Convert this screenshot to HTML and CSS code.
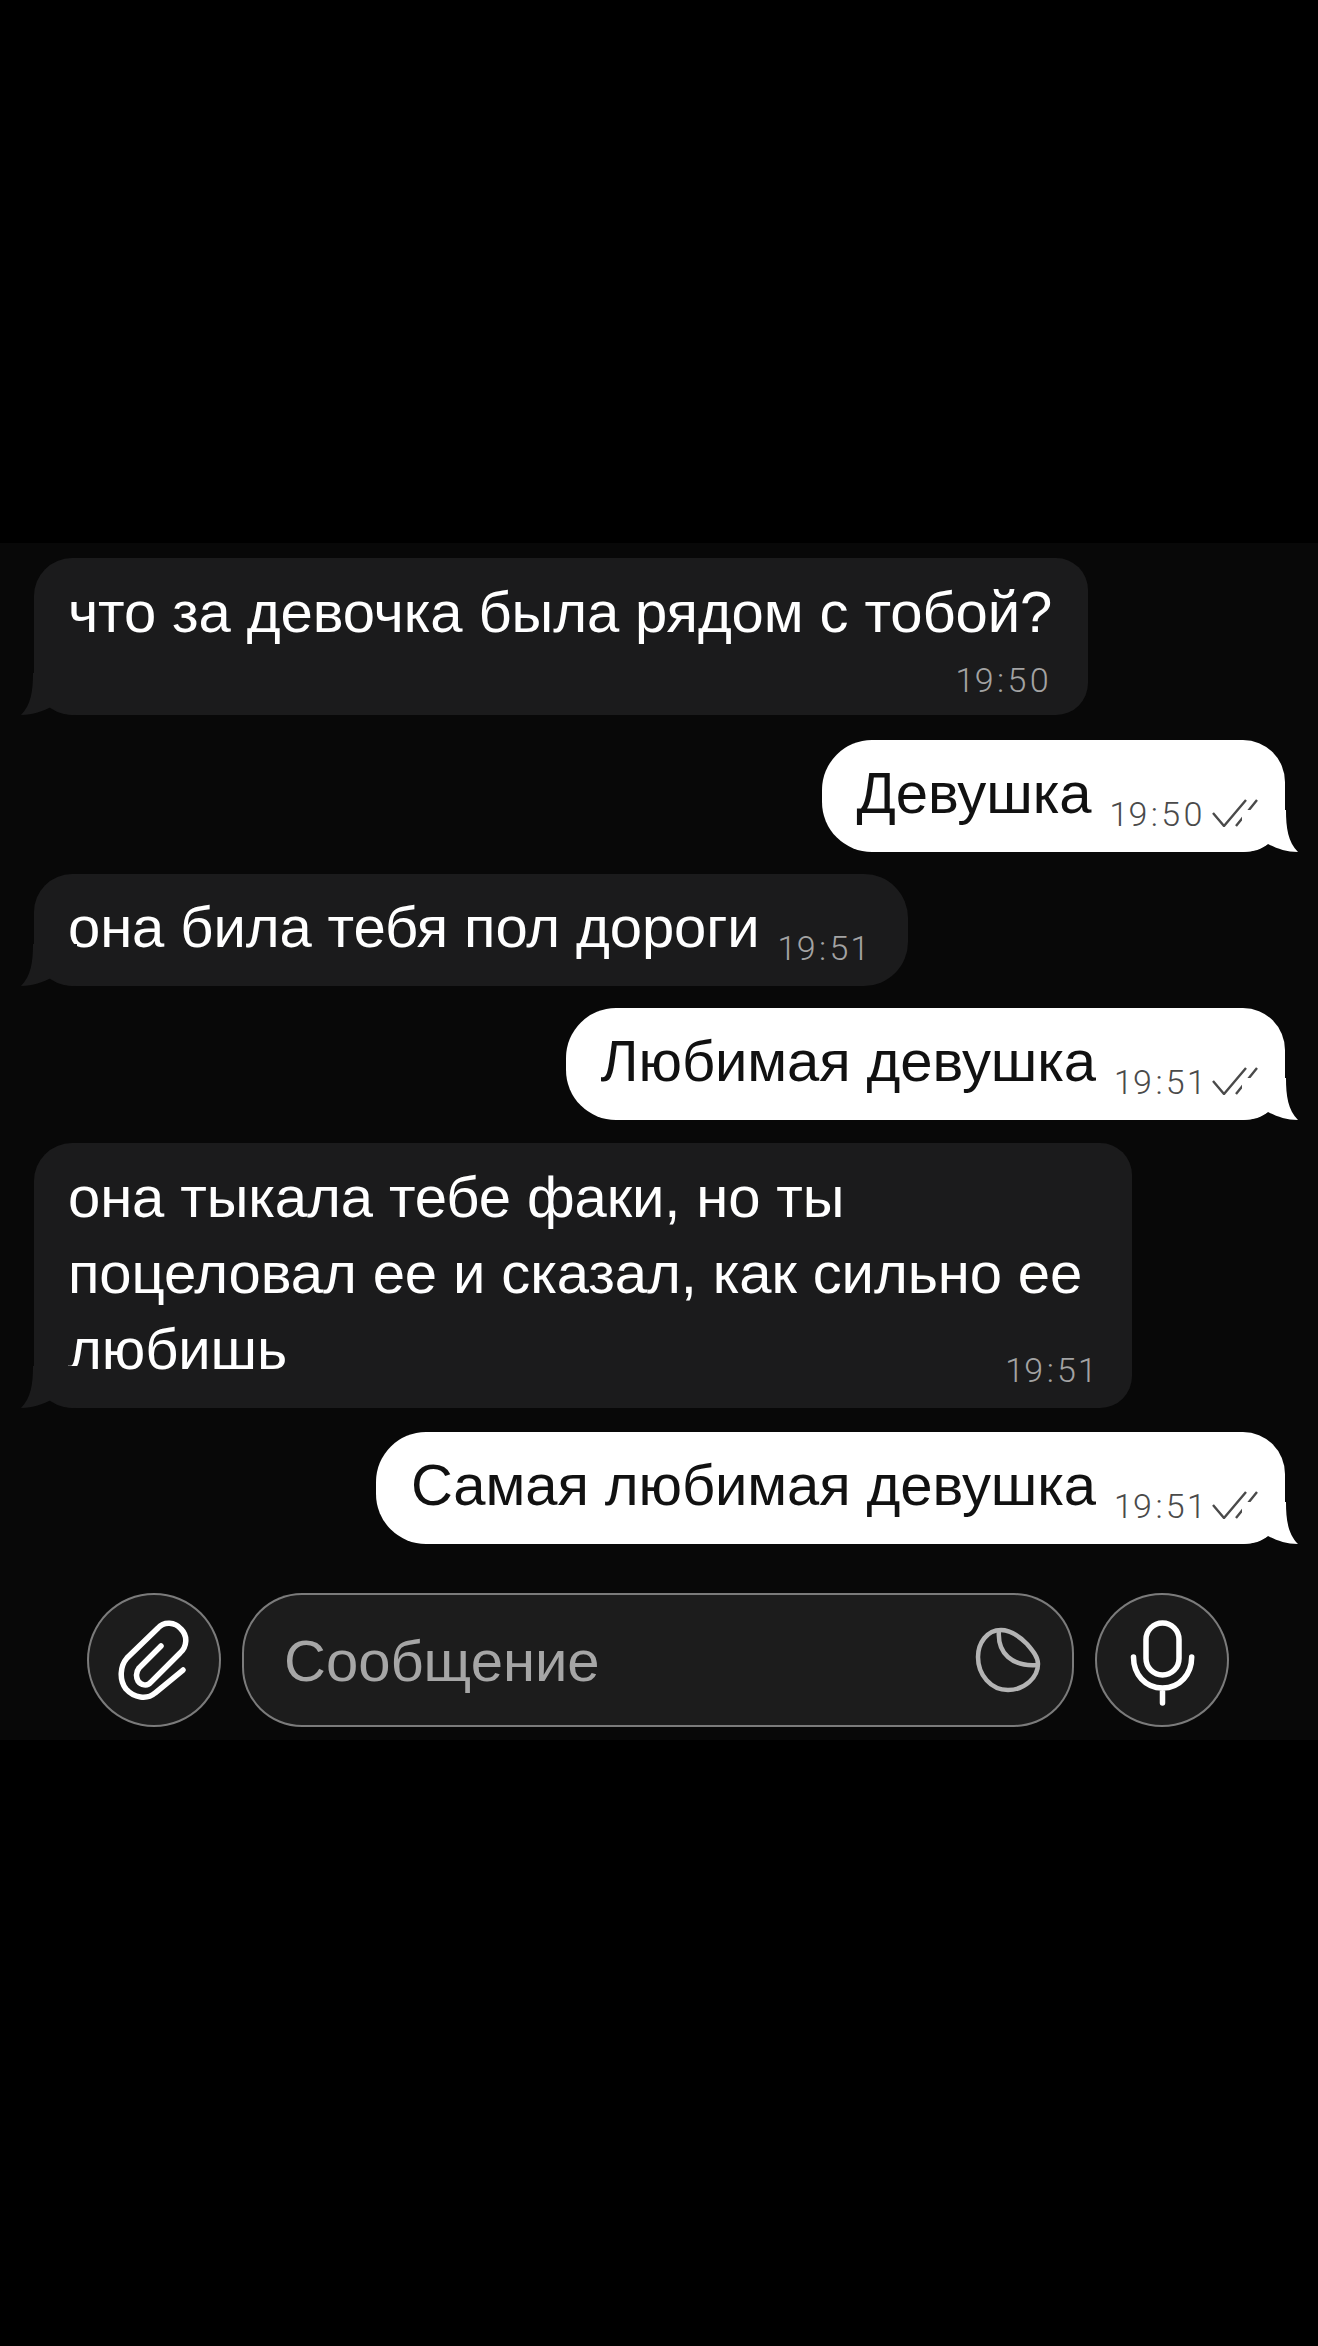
FILE: index.html
```html
<!DOCTYPE html>
<html lang="ru">
<head>
	<meta charset="UTF-8">
	<title>Чат</title>
	<link rel="stylesheet" href="styles.css">
</head>
<body>
	<div class="chat">
		<div class="msg in stack">
			<div class="msg-text">что за девочка была рядом с тобой?</div>
			<div class="time">19:50</div>
			<svg class="tail" viewBox="0 0 56 42"><path d="M12 0C12 18 10 32 0 42C12 42 22 38 30 34C36 39 44 42 56 42V0Z"/></svg>
		</div>
		<div class="msg out">
			<div class="msg-text">Девушка</div>
			<div class="time">19:50</div>
			<svg class="check" viewBox="0 0 46 28"><path d="M1 14L12 27L34 1M24 27L45 1"/></svg>
			<svg class="tail" viewBox="0 0 56 42"><path d="M12 0C12 18 10 32 0 42C12 42 22 38 30 34C36 39 44 42 56 42V0Z"/></svg>
		</div>
		<div class="msg in">
			<div class="msg-text">она била тебя пол дороги</div>
			<div class="time">19:51</div>
			<svg class="tail" viewBox="0 0 56 42"><path d="M12 0C12 18 10 32 0 42C12 42 22 38 30 34C36 39 44 42 56 42V0Z"/></svg>
		</div>
		<div class="msg out">
			<div class="msg-text">Любимая девушка</div>
			<div class="time">19:51</div>
			<svg class="check" viewBox="0 0 46 28"><path d="M1 14L12 27L34 1M24 27L45 1"/></svg>
			<svg class="tail" viewBox="0 0 56 42"><path d="M12 0C12 18 10 32 0 42C12 42 22 38 30 34C36 39 44 42 56 42V0Z"/></svg>
		</div>
		<div class="msg in overlay">
			<div class="msg-text">она тыкала тебе факи, но ты<br>поцеловал ее и сказал, как сильно ее<br>любишь</div>
			<div class="time">19:51</div>
			<svg class="tail" viewBox="0 0 56 42"><path d="M12 0C12 18 10 32 0 42C12 42 22 38 30 34C36 39 44 42 56 42V0Z"/></svg>
		</div>
		<div class="msg out">
			<div class="msg-text">Самая любимая девушка</div>
			<div class="time">19:51</div>
			<svg class="check" viewBox="0 0 46 28"><path d="M1 14L12 27L34 1M24 27L45 1"/></svg>
			<svg class="tail" viewBox="0 0 56 42"><path d="M12 0C12 18 10 32 0 42C12 42 22 38 30 34C36 39 44 42 56 42V0Z"/></svg>
		</div>

		<div class="composer">
			<div class="round-btn">
				<svg class="clip-icon" viewBox="0 0 74 80"><path d="M66 50L38 73C30 80 17 78 9 69C2 60 3 46 10 38L41 8C47 1 58 2 64 9C71 16 70 27 63 33L34 62C30 67 24 65 21 61C19 57 19 52 22 48L44 26"/></svg>
			</div>
			<div class="input-box">
				<span class="placeholder">Сообщение</span>
				<svg class="sticker-icon" viewBox="0 0 66 66"><path d="M26 3C12 3 3 16 3 30C3 48 16 63 33 63C50 63 63 50 63 37C63 30 58 24 52 17C44 9 36 3 26 3Z"/><path class="fold" d="M24 3C23 14 26 24 33 30C41 37 52 39 63 38"/></svg>
			</div>
			<div class="round-btn">
				<svg class="mic-icon" viewBox="0 0 68 86"><rect x="17" y="3" width="33" height="52" rx="16.5"/><path d="M4.5 37C4.5 54 16 68 33.5 68C51 68 62.7 54 62.7 37M33.5 68V83"/></svg>
			</div>
		</div>
	</div>
</body>
</html>
```

FILE: styles.css
```css
html,body{
	margin:0;
	background:#000;
	height:100%;
}
body{
	font-family:"Liberation Sans",Arial,sans-serif;
}
.chat{
	margin-top:543px;
	height:1197px;
	box-sizing:border-box;
	padding:15px 33px 0 34px;
	background:#080808;
	display:flex;
	flex-direction:column;
	gap:22px;
}
.msg{
	position:relative;
	display:flex;
	align-items:flex-end;
	box-sizing:border-box;
	height:112px;
	font-size:58px;
	letter-spacing:-.1px;
	line-height:76px;
}
.msg.in{
	align-self:flex-start;
	padding:0 38px 0 34px;
	border-radius:38px 44px 44px 38px;
	background:#1b1b1c;
	color:#fff;
}
.msg.out{
	align-self:flex-end;
	padding:0 27px 0 35px;
	border-radius:50px 42px 42px 50px;
	background:#fff;
	color:#111;
}
.msg-text{
	padding-bottom:21px;
	white-space:nowrap;
}
.msg.stack{
	display:block;
	height:157px;
	margin-bottom:3px;
	padding-top:16px;
	padding-right:36px;
	border-radius:38px 32px 32px 38px;
}
.msg.stack .msg-text{
	padding-bottom:0;
}
.msg.stack .time{
	margin:10px 0 0;
	text-align:right;
}
.msg.overlay{
	display:grid;
	height:265px;
	margin:1px 0 2px;
	padding-top:16px;
	padding-right:50px;
	border-radius:38px 32px 32px 38px;
}
.msg.overlay .msg-text,
.msg.overlay .time{
	grid-area:1 / 1;
}
.msg.overlay .time{
	justify-self:end;
	align-self:end;
	margin-right:-15px;
}
.time{
	margin:0 0 18px 19px;
	font-family:Roboto,"Liberation Sans",sans-serif;
	font-weight:300;
	font-size:34px;
	line-height:40px;
	letter-spacing:3.2px;
	font-variant-numeric:proportional-nums;
	color:#a3a3a3;
}
.msg.out .time{
	color:#4a4a4a;
}
.check{
	width:46px;
	height:28px;
	margin:0 0 25px 6px;
	fill:none;
	stroke:#4a4a4a;
	stroke-width:2.4;
}
.tail{
	position:absolute;
	bottom:0;
	width:56px;
	height:42px;
}
.msg.in .tail{
	left:-13px;
	fill:#1b1b1c;
}
.msg.out .tail{
	right:-13px;
	fill:#fff;
	transform:scaleX(-1);
}

.composer{
	display:flex;
	gap:21px;
	margin:27px 0 0 53px;
}
.round-btn,
.input-box{
	display:flex;
	align-items:center;
	box-sizing:border-box;
	height:134px;
	background:#1c1c1c;
	border:2px solid rgba(255,255,255,.42);
}
.round-btn{
	justify-content:center;
	width:134px;
	border-radius:50%;
	flex:none;
}
.input-box{
	width:832px;
	flex:none;
	justify-content:space-between;
	padding:0 31px 0 40px;
	border-radius:60px;
}
.placeholder{
	font-size:58px;
	color:#a6a6a6;
}
.clip-icon{
	width:74px;
	height:80px;
	fill:none;
	stroke:#fff;
	stroke-width:5.5;
	stroke-linecap:round;
}
.sticker-icon{
	width:66px;
	height:66px;
	fill:none;
	stroke:#b4b4b4;
	stroke-width:4.5;
}
.mic-icon{
	width:68px;
	height:86px;
	margin-top:6px;
	margin-left:2px;
	fill:none;
	stroke:#fff;
	stroke-width:5.5;
	stroke-linecap:round;
}
```
